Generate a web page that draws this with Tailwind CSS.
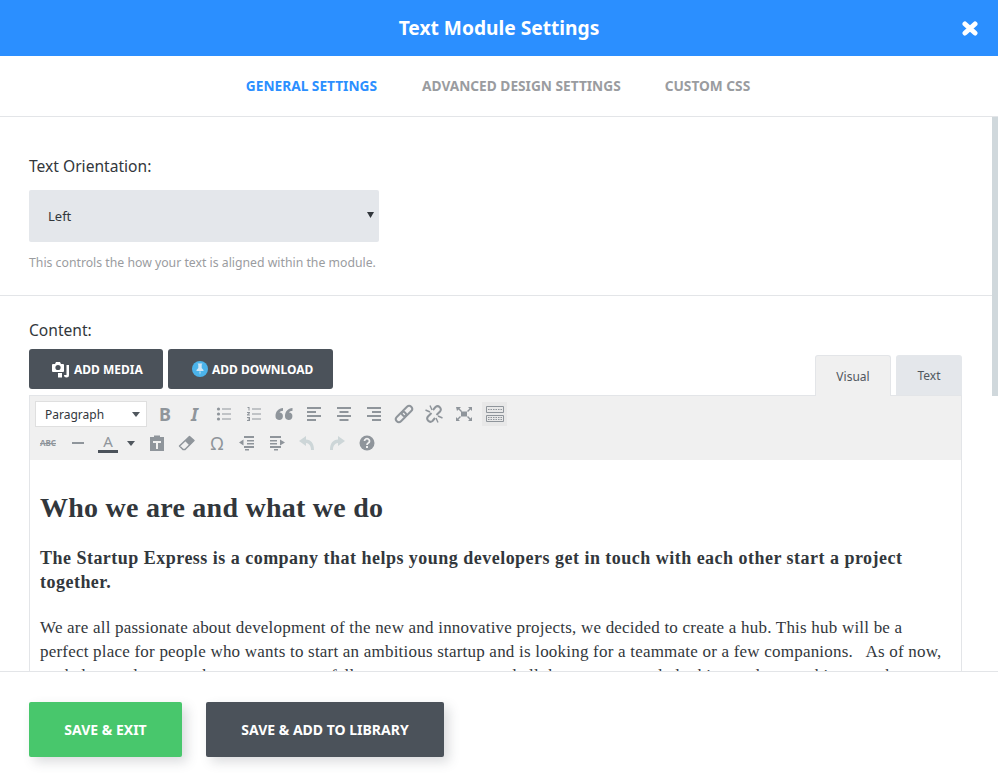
<!DOCTYPE html>
<html lang="en">
<head>
    <meta charset="UTF-8">
    <title>Text Module Settings</title>
    <script src="https://cdn.jsdelivr.net/npm/@tailwindcss/browser@4"></script>
</head>
<body class="bg-white font-['Noto_Sans','Open_Sans',sans-serif]">
    <div class="w-[998px] h-[775px] flex flex-col overflow-hidden relative">
        <!-- Header -->
        <div class="h-14 shrink-0 bg-[#2b8fff] flex items-center justify-center relative">
            <h1 class="text-[19.2px] font-bold text-white">Text Module Settings</h1>
            <svg class="absolute left-[962px] top-[21px] w-4 h-[15px]" viewBox="0 0 16 15"><path d="M3 3 L13 12 M13 3 L3 12" fill="none" stroke="#fff" stroke-width="5" stroke-linecap="round"/></svg>
        </div>

        <!-- Tabs -->
        <div class="h-[61px] shrink-0 border-b border-[#e3e5e8] flex items-center justify-center gap-11 text-[13.7px] font-bold text-[#9a9ca0]">
            <span class="text-[#2b8fff] -ml-[2px] mr-[1px]">GENERAL SETTINGS</span>
            <span>ADVANCED DESIGN SETTINGS</span>
            <span>CUSTOM CSS</span>
        </div>

        <!-- Scrolling settings -->
        <div class="flex-1 min-h-0 overflow-hidden relative">
            <div class="absolute right-0 top-0 w-[6px] h-[279px] bg-[#d0d8dc]"></div>

            <div class="h-[179px] border-b border-[#e3e5e8] pl-[29px] pt-[39px]">
                <p class="text-[15.6px] leading-5 text-[#32373c]">Text Orientation:</p>
                <div class="mt-[14px] w-[350px] h-[52px] bg-[#e4e7eb] rounded-[2px] flex items-center justify-between pl-[19px] pr-[5px] pt-[2px] text-[13px] text-[#32373c]">
                    <span>Left</span>
                    <svg class="w-[7px] h-[6px] -mt-[4px]" viewBox="0 0 7 6"><path d="M0 0h7L3.5 6z" fill="#32373c"/></svg>
                </div>
                <p class="mt-[13px] text-[12.25px] leading-4 text-[#9a9ca0]">This controls the how your text is aligned within the module.</p>
            </div>

            <div class="pl-[29px] pr-[36px] pt-[24px]">
                <p class="text-[15.6px] leading-5 text-[#32373c]">Content:</p>
                <div class="mt-[9px] flex items-end justify-between h-[46px]">
                    <div class="flex gap-[5px] self-start">
                        <div class="w-[134px] h-10 bg-[#4b525a] rounded-[3px] flex items-center gap-1 pl-[23px] text-[12px] font-bold text-white">
                            <svg class="w-[18px] h-[16px] mt-[2px]" viewBox="0 0 18 16" fill="#fff"><path d="M0 3q0-1 1-1h2l1-2h4l1 2h2q1 0 1 1v6q0 1-1 1H1q-1 0-1-1z"/><circle cx="6" cy="5.500" r="2.600" fill="#4b525a"/><path d="M6 11h4v4.500H6z"/><path d="M14.500 3h2.500v10a2.500 2.500 0 0 1-5 0h2.500z"/></svg>
                            <span class="pt-[1px]">ADD MEDIA</span>
                        </div>
                        <div class="w-[165px] h-10 bg-[#4b525a] rounded-[3px] flex items-center gap-1 pl-[24px] text-[12px] font-bold text-white">
                            <svg class="w-4 h-4 -mt-[1px]" viewBox="0 0 16 16"><circle cx="8" cy="8" r="8" fill="#4bb3ea"/><path d="M5.500 2.500h5l-.8 1.200v3.300l1.800 2v1h-7v-1l1.800-2V3.700zM7.300 10.500h1.400L8 14z" fill="#cfe6f5"/></svg>
                            <span class="pt-[1px]">ADD DOWNLOAD</span>
                        </div>
                    </div>
                    <div class="flex gap-[5px] text-[12px]">
                        <div class="w-[76px] h-[41px] -mb-px pt-[2px] bg-[#f0f0f0] border border-b-0 border-[#e3e5e8] rounded-t-[3px] flex items-center justify-center text-[#50575e]">Visual</div>
                        <div class="w-[66px] h-[40px] pt-[2px] bg-[#e4e7eb] rounded-t-[3px] flex items-center justify-center text-[#50575e]">Text</div>
                    </div>
                </div>

                <!-- Editor -->
                <div class="border border-[#e3e5e8] border-b-0 h-[400px]">
                    <div class="h-[64px] bg-[#f0f0f0] pl-[5px] pt-[5px] text-[#8f959b]">
                        <!-- Toolbar row 1 -->
                        <div class="flex items-center h-[26px]">
                            <div class="w-[112px] h-[26px] mr-[3px] bg-white border border-[#dfdfdf] flex items-center justify-between pl-[9px] pr-[6px] text-[12px] text-[#32373c]">
                                <span class="pt-[1px]">Paragraph</span>
                                <svg class="w-2 h-[5px]" viewBox="0 0 8 5"><path d="M0 0h8L4 5z" fill="#50575e"/></svg>
                            </div>
                            <span class="w-[30px] text-center text-[18px] font-bold leading-none">B</span>
                            <span class="w-[29px] text-center text-[18px] font-bold italic leading-none">I</span>
                            <div class="flex items-center">
                                <span class="w-[30px] flex justify-center"><svg class="w-5 h-5" viewBox="0 0 20 20" fill="currentColor"><circle cx="4.500" cy="5" r="1.600"/><circle cx="4.500" cy="10" r="1.600"/><circle cx="4.500" cy="15" r="1.600"/><path d="M8 4.500h9v1H8zM8 9.500h9v1H8zM8 14.500h9v1H8z"/></svg></span>
                                <span class="w-[30px] flex justify-center"><svg class="w-5 h-5" viewBox="0 0 20 20" fill="currentColor"><path d="M3.500 3h2v3.500h-1V4h-1zM3 8h3v1L4.500 10.500H6v1H3v-1L4.800 9H3zM3 13h3v4H3v-1h2v-.5H3.800v-1H5V14H3z"/><path d="M8 4.500h9v1H8zM8 9.500h9v1H8zM8 14.500h9v1H8z"/></svg></span>
                                <span class="w-[30px] flex justify-center"><svg class="w-5 h-5" viewBox="0 0 20 20" fill="currentColor"><path d="M9 4C4.500 4.500 1.500 7.500 1.500 12A3.700 3.700 0 1 0 5.500 8.500C6 7.500 7.500 6.800 9 6.800zM18.500 4C14 4.500 11 7.500 11 12a3.700 3.700 0 1 0 4-3.500c.5-1 2-1.700 3.500-1.700z"/></svg></span>
                                <span class="w-[30px] flex justify-center"><svg class="w-5 h-5" viewBox="0 0 20 20" fill="currentColor"><path d="M3 3h14v2H3zM3 7h9v2H3zM3 11h14v2H3zM3 15h9v2H3z"/></svg></span>
                                <span class="w-[30px] flex justify-center"><svg class="w-5 h-5" viewBox="0 0 20 20" fill="currentColor"><path d="M3 3h14v2H3zM5.500 7h9v2h-9zM3 11h14v2H3zM5.500 15h9v2h-9z"/></svg></span>
                                <span class="w-[30px] flex justify-center"><svg class="w-5 h-5" viewBox="0 0 20 20" fill="currentColor"><path d="M3 3h14v2H3zM8 7h9v2H8zM3 11h14v2H3zM8 15h9v2H8z"/></svg></span>
                                <span class="w-[30px] flex justify-center"><svg class="w-5 h-5" viewBox="0 0 20 20" fill="none" stroke="currentColor" stroke-width="2"><rect x="1" y="10" width="12" height="6" rx="3" transform="rotate(-45 7 13)"/><rect x="7" y="4" width="12" height="6" rx="3" transform="rotate(-45 13 7)"/></svg></span>
                                <span class="w-[30px] flex justify-center"><svg class="w-5 h-5" viewBox="0 0 20 20" fill="none" stroke="currentColor" stroke-width="2"><path d="M7.500 9L4 12.500a3.200 3.200 0 0 0 4.500 4.500L11 14M12.500 11L16 7.500A3.200 3.200 0 0 0 11.500 3L9 6"/><path d="M1.500 6l4.500 2M6 1.500l2 4.500M18.500 14l-4.500-2M14 18.500l-2-4.500" stroke-width="1.400"/></svg></span>
                                <span class="w-[30px] flex justify-center"><svg class="w-5 h-5" viewBox="0 0 20 20" fill="currentColor"><path d="M7 7.500h6v5H7zM2 3h5L5.500 4.500l2.500 2.500-1 1-2.500-2.500L3 7zM18 3v4l-1.500-1.500L14 8l-1-1 2.500-2.500L14 3zM2 17v-4l1.500 1.500L6 12l1 1-2.500 2.500L6 17zM18 17h-4l1.500-1.500L13 13l1-1 2.500 2.500L18 13z"/></svg></span>
                                <span class="w-[25px] h-[24px] ml-[3px] bg-[#e8e8e8] flex justify-center items-center"><svg class="w-[18px] h-4" viewBox="0 0 18 16" fill="none" stroke="currentColor"><path d="M.5 .5h17v6H.5zM.5 9.500h17v6H.5z"/><path d="M2 3.500h14M2 11.500h14M2 13.500h14" stroke-dasharray="1.500 1"/></svg></span>
                            </div>
                        </div>
                        <!-- Toolbar row 2 -->
                        <div class="flex items-center h-[32px] -ml-[2px]">
                            <span class="w-[30px] text-center text-[8px] font-bold line-through leading-none">ABC</span>
                            <span class="w-[30px] flex justify-center"><span class="w-[12px] h-[2px] bg-[#8f959b]"></span></span>
                            <span class="w-[30px] flex flex-col items-center">
                                <span class="text-[15px] leading-[15px]">A</span>
                                <span class="w-5 h-[3px] mt-[1px] bg-[#4b525a]"></span>
                            </span>
                            <span class="w-[19px] flex justify-center pr-[3px]"><svg class="w-2 h-[5px]" viewBox="0 0 8 5"><path d="M0 0h8L4 5z" fill="#50575e"/></svg></span>
                            <span class="w-[30px] flex justify-center"><svg class="w-5 h-5" viewBox="0 0 20 20" fill="currentColor"><path d="M3 4h4V2.500h6V4h4v14H3zM6 8v2h3v6h2v-6h3V8z"/></svg></span>
                            <span class="w-[30px] flex justify-center"><svg class="w-5 h-5" viewBox="0 0 20 20"><path d="M12.500 3.500l4.500 4-9 9h-2l-3.500-3.500z" fill="none" stroke="currentColor" stroke-width="1.500" stroke-linejoin="round"/><path d="M12.500 3.500l4.500 4-4.500 5-4.500-4.500z" fill="currentColor"/></svg></span>
                            <span class="w-[30px] text-center text-[18px] leading-none">Ω</span>
                            <span class="w-[30px] flex justify-center"><svg class="w-5 h-5" viewBox="0 0 20 20" fill="currentColor"><path d="M7 3h10v2H7zM10 7h7v1.500h-7zM10 10h7v1.500h-7zM7 13h10v2H7zM8 16h4v1.500H8zM2 9.500L6.500 6.500v6z"/></svg></span>
                            <span class="w-[30px] flex justify-center"><svg class="w-5 h-5" viewBox="0 0 20 20" fill="currentColor"><path d="M3 3h11v2H3zM3 7h7v1.500H3zM3 10h7v1.500H3zM3 13h11v2H3zM7 16h4v1.500H7zM18 9.500L13 6.500v6z"/></svg></span>
                            <span class="w-[30px] flex justify-center text-[#cdd6d8]"><svg class="w-5 h-5" viewBox="0 0 20 20" fill="currentColor"><path d="M9 3v3.500c5 .5 8 3.500 8 10.500h-3c0-4-1.500-6.500-5-7V13L2 8z"/></svg></span>
                            <span class="w-[30px] flex justify-center text-[#cdd6d8]"><svg class="w-5 h-5" viewBox="0 0 20 20" fill="currentColor"><path d="M11 3v3.500C6 7 3 10 3 17h3c0-4 1.500-6.500 5-7V13l7-5z"/></svg></span>
                            <span class="w-[30px] flex justify-center"><svg class="w-5 h-5" viewBox="0 0 20 20"><circle cx="10" cy="10" r="7.500" fill="currentColor"/><path d="M7.500 8a2.500 2.300 0 1 1 3.800 2c-.9.600-1.300 1-1.300 2" fill="none" stroke="#f0f0f0" stroke-width="1.800"/><rect x="9" y="13" width="2" height="2" fill="#f0f0f0"/></svg></span>
                        </div>
                    </div>
                    <div class="px-[10px] pt-[31px] font-['Liberation_Serif'] text-[#32373c] whitespace-nowrap">
                        <h2 class="text-[28px] font-bold leading-[34px] tracking-[0.25px]">Who we are and what we do</h2>
                        <p class="mt-[21px] text-[18px] font-bold leading-6 tracking-[0.48px]">The Startup Express is a company that helps young developers get in touch with each other start a project<br>together.</p>
                        <p class="mt-[22px] text-[17px] leading-6 tracking-[0.21px]">We are all passionate about development of the new and innovative projects, we decided to create a hub. This hub will be a<br>perfect place for people who wants to start an ambitious startup and is looking for a teammate or a few companions. &nbsp; As of now,<br>we help people meet other programmers, fellow startup owners, and all those great people looking to do something together</p>
                    </div>
                </div>
            </div>
        </div>

        <!-- Footer -->
        <div class="absolute left-0 bottom-0 w-full h-[104px] bg-white border-t border-[#e3e5e8] flex items-start gap-6 pl-[29px] pt-[30px] text-[14px] font-bold text-white">
            <div class="w-[153px] h-[55px] bg-[#48c76c] rounded-[2px] shadow-[5px_5px_12px_rgba(75,82,90,0.2)] flex items-center justify-center">SAVE &amp; EXIT</div>
            <div class="w-[238px] h-[55px] bg-[#4b525a] rounded-[2px] shadow-[5px_5px_12px_rgba(75,82,90,0.2)] flex items-center justify-center">SAVE &amp; ADD TO LIBRARY</div>
        </div>
    </div>
</body>
</html>
